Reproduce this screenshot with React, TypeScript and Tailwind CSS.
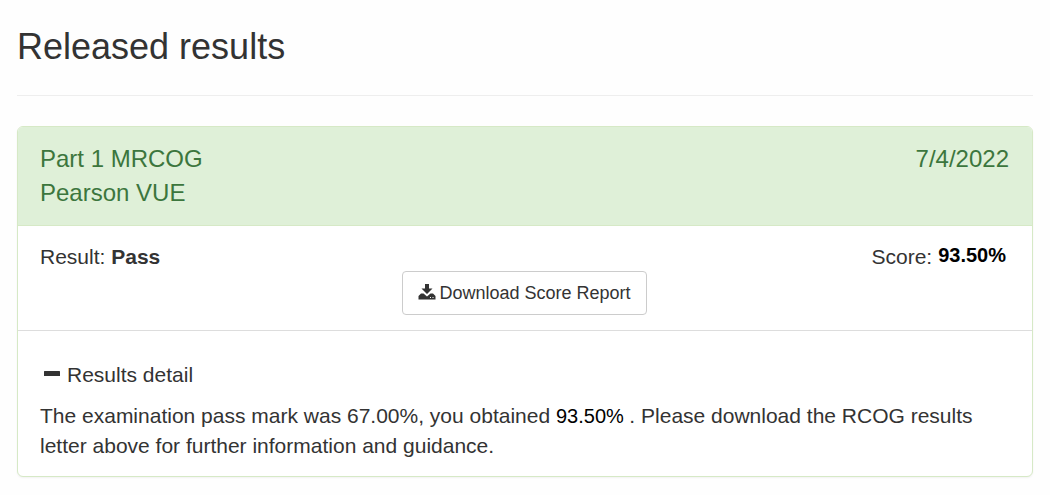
export default function App() {
  return (
    <main className="min-h-screen bg-[#fefefe] px-[17px] pt-[22px] pb-[18px] font-['Liberation_Sans',Arial,sans-serif] text-[21px] leading-[30px] text-[#333333]">
      <h1 className="border-b border-[#eeeeee] pb-6 text-[36px] leading-[49px]">Released results</h1>
      <section className="mt-[30px] overflow-hidden rounded-md border border-[#d6e9c6] bg-white shadow-xs">
        <header className="flex items-start justify-between border-b border-[#d6e9c6] bg-[#dff0d8] pr-[23px] pl-[22px] py-[15px] text-2xl leading-[34px] text-[#3c763d]">
          <h2>
            Part 1 MRCOG
            <br />
            Pearson VUE
          </h2>
          <time dateTime="2022-04-07">7/4/2022</time>
        </header>
        <div className="border-b border-[#dddddd] pr-[23px] pl-[22px] pt-4 pb-[15px]">
          <div className="flex h-[29px] justify-between">
            <p>
              Result: <strong>Pass</strong>
            </p>
            <p className="flex gap-[6px] pr-[3px]">
              <span>Score:</span>
              <strong className="text-xl leading-[26px] text-black">93.50%</strong>
            </p>
          </div>
          <div className="flex justify-center">
            <button
              type="button"
              className="flex h-11 items-center gap-[3px] rounded border border-[#cccccc] bg-white px-[15px] text-lg"
            >
              <svg viewBox="0 0 18 18" className="size-[18px]" fill="currentColor" aria-hidden="true">
                <path d="M7 0h4v4.500h3.500L9 10 3.500 4.500H7z" />
                <path
                  fillRule="evenodd"
                  d="M3 9.500h2.500L9 12.500l3.500-3h2.500l2.500 2.500v3.500H.5V12zM12 13v1h1v-1zM14.500 13v1h1v-1z"
                />
              </svg>
              Download Score Report
            </button>
          </div>
        </div>
        <div className="pr-[23px] pl-[22px] pt-[29px] pb-[15px]">
          <button type="button" className="flex items-center gap-[7px]">
            <svg viewBox="0 0 20 20" className="size-5" fill="currentColor" aria-hidden="true">
              <rect x="4" y="6" width="16" height="5" rx="0.5" />
            </svg>
            Results detail
          </button>
          <p className="mt-[11px]">
            The examination pass mark was 67.00%, you obtained{" "}
            <span className="text-xl leading-none text-black">93.50% </span>. Please download the RCOG results letter
            above for further information and guidance.
          </p>
        </div>
      </section>
    </main>
  );
}
